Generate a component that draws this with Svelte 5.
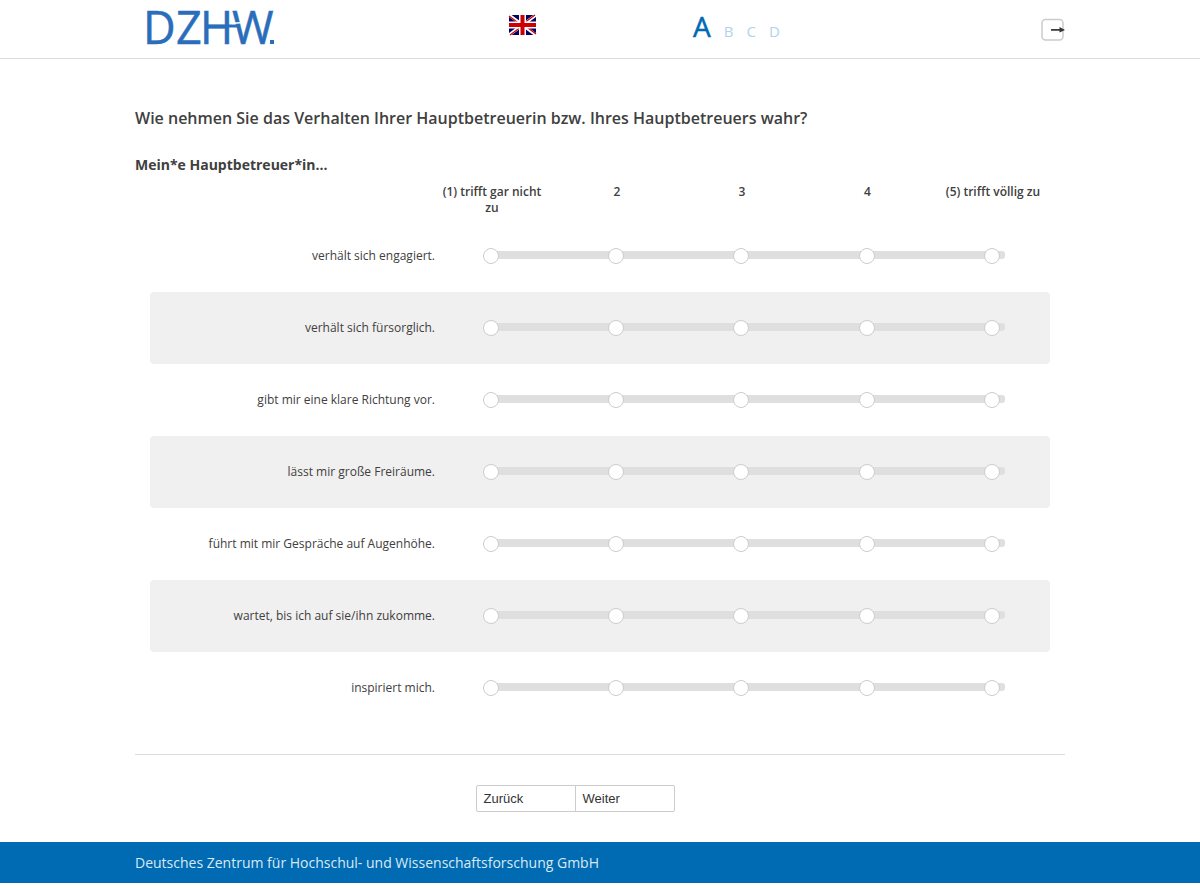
<script>
  const scale = ['(1) trifft gar nicht zu', '2', '3', '4', '(5) trifft völlig zu'];
  const items = [
    'verhält sich engagiert.',
    'verhält sich fürsorglich.',
    'gibt mir eine klare Richtung vor.',
    'lässt mir große Freiräume.',
    'führt mit mir Gespräche auf Augenhöhe.',
    'wartet, bis ich auf sie/ihn zukomme.',
    'inspiriert mich.'
  ];
  const steps = ['A', 'B', 'C', 'D'];
  let answers = $state(items.map(() => null));
</script>

<header>
  <div class="wrap bar">
    <a class="logo" href="#start" aria-label="DZHW">
      <svg width="150" height="56" viewBox="0 0 150 56">
        <text x="8 41 65 97" y="44">DZHW</text>
        <rect x="135" y="40" width="4" height="4" fill="#2a6ebb" />
        <path d="M70 26H103" stroke="#2a6ebb" stroke-width="3" />
        <path d="M97 23.500L107 22.500" stroke="#fff" stroke-width="1.500" />
        <path d="M98.500 29L101.500 29" stroke="#fff" stroke-width="1.500" />
      </svg>
    </a>
    <a class="flag" href="#en" aria-label="English">
      <svg width="27" height="20" viewBox="0 0 27 20">
        <rect width="27" height="20" fill="#006" />
        <path d="M0 0L27 20M27 0L0 20" stroke="#fff" stroke-width="3.200" />
        <path d="M0 1L12 10M27 19L15 10M26 0L15 8M1 20L12 12" stroke="#c00" stroke-width="1.200" />
        <path d="M13.500 0V20M0 10H27" stroke="#fff" stroke-width="7" />
        <path d="M13.500 0V20M0 10H27" stroke="#c00" stroke-width="4" />
      </svg>
    </a>
    <div class="steps">
      {#each steps as step, i}
        <span class:current={i === 0}>{step}</span>
      {/each}
    </div>
    <button class="exit" type="button" aria-label="Abmelden">
      <svg width="24" height="24" viewBox="0 0 24 24">
        <rect x="1" y="1.500" width="21" height="20.500" rx="3.500" fill="none" stroke="#ccc" stroke-width="1.500" />
        <path d="M10 11.900H20" stroke="#333" stroke-width="1.700" />
        <path d="M18.500 9L24 11.900L18.500 14.500Z" fill="#333" />
      </svg>
    </button>
  </div>
</header>

<main class="wrap">
  <h1>Wie nehmen Sie das Verhalten Ihrer Hauptbetreuerin bzw. Ihres Hauptbetreuers wahr?</h1>
  <h2>Mein*e Hauptbetreuer*in...</h2>
  <div class="matrix">
    <table>
      <colgroup>
        <col class="label-col" /><col class="first-col" /><col class="mid-col" /><col class="mid-col" /><col class="wide-col" /><col class="last-col" />
      </colgroup>
      <thead>
        <tr>
          <td></td>
          {#each scale as label}
            <th scope="col">{label}</th>
          {/each}
        </tr>
      </thead>
      <tbody>
        {#each items as item, row}
          <tr>
            <th scope="row">{item}</th>
            {#each scale as label, col}
              <td>
                <input type="radio" name="item{row}" value={col + 1} bind:group={answers[row]} aria-label="{item} {label}" />
              </td>
            {/each}
          </tr>
        {/each}
      </tbody>
    </table>
  </div>
  <nav>
    <button type="button">Zurück</button>
    <button type="button">Weiter</button>
  </nav>
</main>

<footer>
  <div class="wrap">Deutsches Zentrum für Hochschul- und Wissenschaftsforschung GmbH</div>
</footer>

<style>
  :global(body) {
    background: #fff;
    color: #404040;
    font-family: "Open Sans", sans-serif;
  }
  .wrap {
    max-width: 930px;
    margin: 0 auto;
  }
  header {
    border-bottom: 1px solid #ddd;
  }
  .bar {
    display: grid;
    grid-template-columns: 40% 20% 1fr auto;
    height: 58px;
    align-items: start;
  }
  svg {
    display: block;
    overflow: visible;
  }
  .logo text {
    font-family: "Open Sans", sans-serif;
    font-size: 45px;
    fill: #2a6ebb;
    stroke: #2a6ebb;
    stroke-width: 0.5px;
  }
  .flag {
    padding: 15px 0 0 2px;
  }
  .steps {
    display: flex;
    align-items: baseline;
    gap: 13px;
    padding-top: 6px;
    font-size: 15px;
    line-height: 40px;
    color: #b2d3ea;
  }
  .steps .current {
    font-size: 28px;
    color: #006ab3;
    -webkit-text-stroke: 0.5px #006ab3;
  }
  .exit {
    margin: 18px 0 0;
    padding: 0;
    border: 0;
    background: none;
  }
  h1 {
    margin: 47px 0 0;
    font-size: 16px;
    line-height: 24px;
    font-weight: 600;
  }
  h2 {
    margin: 25px 0 0;
    font-size: 14px;
    line-height: 20px;
    font-weight: 700;
  }
  .matrix {
    padding: 9px 15px 30px;
    border-bottom: 1px solid #ddd;
  }
  table {
    width: 100%;
    table-layout: fixed;
    border-collapse: collapse;
    font-size: 12px;
    line-height: 16px;
  }
  .label-col { width: 285px; }
  .first-col { width: 119px; }
  .mid-col { width: 125px; }
  .wide-col { width: 126px; }
  .last-col { width: 120px; }
  td, th {
    padding: 0;
    text-align: center;
  }
  thead th {
    height: 36px;
    padding-left: 1px;
    font-weight: 600;
    vertical-align: top;
  }
  thead th:nth-child(2) {
    padding-right: 6px;
  }
  thead th:last-child {
    padding-left: 6px;
  }
  tbody tr {
    height: 72px;
  }
  tbody th {
    font-weight: 400;
    text-align: right;
    border-radius: 4px 0 0 4px;
  }
  tbody td {
    position: relative;
    padding-right: 1px;
  }
  tbody td:nth-child(2) {
    padding-right: 7px;
  }
  tbody td:last-child {
    padding: 0 0 0 4px;
    border-radius: 0 4px 4px 0;
  }
  tbody tr:nth-child(even) > * {
    background: #f0f0f0;
  }
  tbody td::before {
    content: "";
    position: absolute;
    top: 31px;
    left: 0;
    right: 0;
    height: 8px;
    background: #dfdfdf;
  }
  tbody td:nth-child(2)::before {
    left: 50%;
  }
  tbody td:last-child::before {
    right: 45px;
    border-radius: 0 3px 3px 0;
  }
  input {
    appearance: none;
    position: relative;
    display: block;
    box-sizing: border-box;
    width: 16px;
    height: 16px;
    margin: 0 auto;
    border: 1px solid #ccc;
    border-radius: 50%;
    background: #fff;
  }
  input:checked {
    border: 4px solid #006ab3;
  }
  nav {
    display: flex;
    justify-content: center;
    padding: 30px 50px 30px 0;
  }
  nav button {
    width: 100px;
    height: 27px;
    padding: 0 7px;
    border: 1px solid #ccc;
    border-radius: 2px 0 0 2px;
    background: #fff;
    color: #333;
    font: 13px "Liberation Sans", sans-serif;
    text-align: left;
  }
  nav button + button {
    margin-left: -1px;
    border-radius: 0 2px 2px 0;
  }
  footer {
    background: #006ab3;
    color: #d9e9f4;
    font-size: 14px;
    line-height: 41px;
  }
</style>
